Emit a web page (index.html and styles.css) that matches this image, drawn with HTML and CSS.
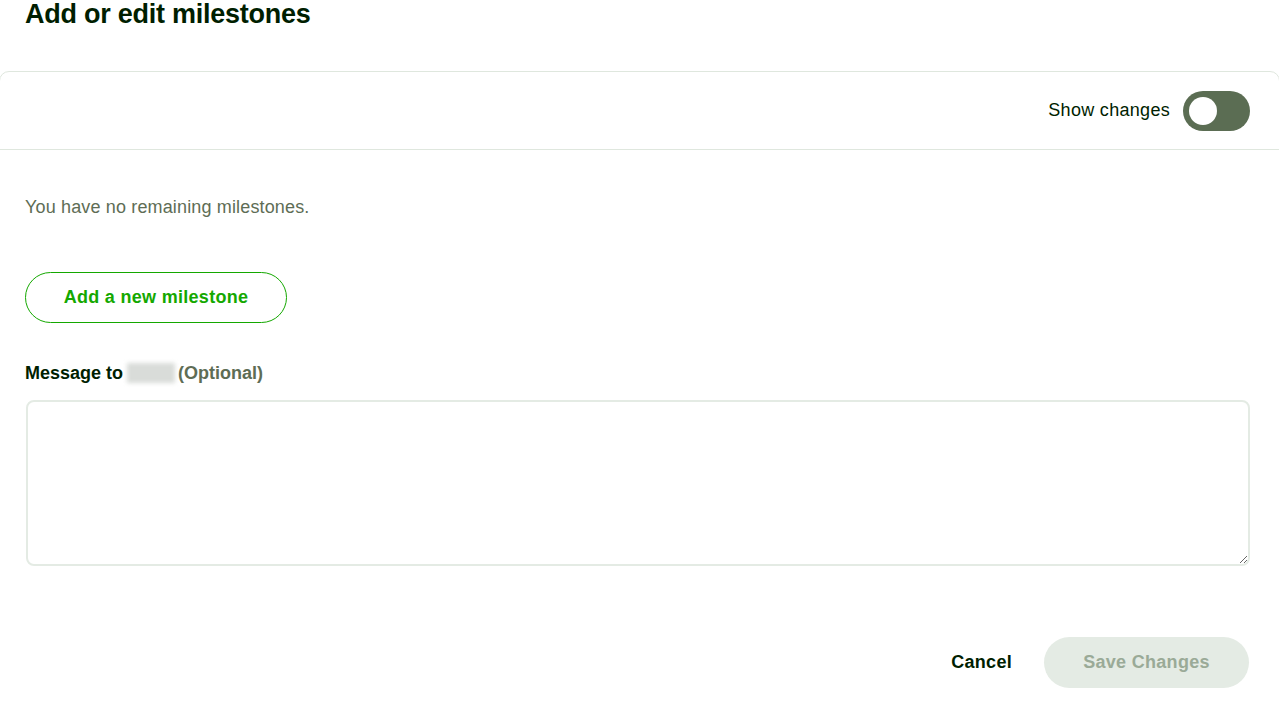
FILE: index.html
```html
<!DOCTYPE html>
<html lang="en">
  <head>
    <meta charset="UTF-8" />
    <meta name="viewport" content="width=device-width, initial-scale=1.0" />
    <title>Add or edit milestones</title>
    <link rel="stylesheet" href="styles.css">
  </head>
  <body>
    <div class="modal">
      <h1 class="modal-title">Add or edit milestones</h1>

      <div class="changes-bar">
        <label class="switch-label" for="showChanges">Show changes</label>
        <button class="switch" id="showChanges" type="button" aria-pressed="false">
          <span class="knob"></span>
        </button>
      </div>

      <div class="modal-body">
        <p class="empty-note">You have no remaining milestones.</p>

        <button class="add-btn" type="button">Add a new milestone</button>

        <label class="message-label" for="message">
          Message to <span class="blurred-name"></span> <span class="optional">(Optional)</span>
        </label>
        <textarea class="message-box" id="message"></textarea>

        <div class="actions">
          <button class="cancel-btn" type="button">Cancel</button>
          <button class="save-btn" type="button" disabled>Save Changes</button>
        </div>
      </div>
    </div>
  </body>
</html>
```

FILE: styles.css
```css
body {
  margin: 0;
  font-family: "Liberation Sans", Arial, sans-serif;
  color: #001e00;
  background-color: #ffffff;
}
.modal {
  width: 1279px;
  height: 720px;
  overflow: hidden;
}
.modal-title {
  margin: 0;
  padding: 0 25px;
  font-size: 27px;
  line-height: 28px;
  font-weight: 600;
  letter-spacing: -0.25px;
}
.changes-bar {
  display: flex;
  justify-content: flex-end;
  align-items: center;
  gap: 13px;
  height: 77px;
  margin: 43px -1px 0 -1px;
  padding: 0 29px 0 30px;
  border: 1px solid #dfe7de;
  border-radius: 10px 10px 0 0;
}
.switch-label {
  font-size: 18px;
  letter-spacing: 0.3px;
}
.switch {
  position: relative;
  width: 67px;
  height: 40px;
  padding: 0;
  border: none;
  border-radius: 20px;
  background-color: #5b6d53;
  cursor: pointer;
}
.knob {
  position: absolute;
  top: 6px;
  left: 6px;
  width: 28px;
  height: 28px;
  border-radius: 50%;
  background-color: #ffffff;
}
.modal-body {
  padding: 0 30px 0 25px;
}
.empty-note {
  margin: 45px 0 0;
  font-size: 18px;
  line-height: 24px;
  letter-spacing: 0.15px;
  color: #5e6d55;
}
.add-btn {
  display: block;
  margin-top: 53px;
  width: 262px;
  height: 51px;
  border: 1px solid #14a800;
  border-radius: 26px;
  background: #ffffff;
  color: #14a800;
  font-family: inherit;
  font-size: 18px;
  font-weight: 600;
  letter-spacing: 0.3px;
  cursor: pointer;
}
.message-label {
  display: flex;
  align-items: center;
  margin-top: 38px;
  font-size: 18px;
  font-weight: 600;
  line-height: 24px;
}
.blurred-name {
  display: inline-block;
  width: 48px;
  height: 20px;
  margin: 0 3px 0 4px;
  background-color: #d9dcd9;
  filter: blur(2px);
}
.optional {
  color: #5e6d55;
}
.message-box {
  display: block;
  box-sizing: border-box;
  width: 1224px;
  height: 166px;
  margin-top: 15px;
  margin-left: 1px;
  border: 2px solid #e4ebe4;
  border-radius: 8px;
  font-family: inherit;
  font-size: 16px;
  outline: none;
}
.actions {
  display: flex;
  justify-content: flex-end;
  align-items: center;
  gap: 32px;
  margin-top: 71px;
}
.cancel-btn {
  padding: 0;
  border: none;
  background: none;
  color: #001e00;
  font-family: inherit;
  font-size: 18px;
  font-weight: 600;
  letter-spacing: 0.3px;
  cursor: pointer;
}
.save-btn {
  width: 205px;
  height: 51px;
  border: none;
  border-radius: 26px;
  background-color: #e4ebe4;
  color: #9aaa97;
  font-family: inherit;
  font-size: 18px;
  font-weight: 600;
  letter-spacing: 0.3px;
}
```
